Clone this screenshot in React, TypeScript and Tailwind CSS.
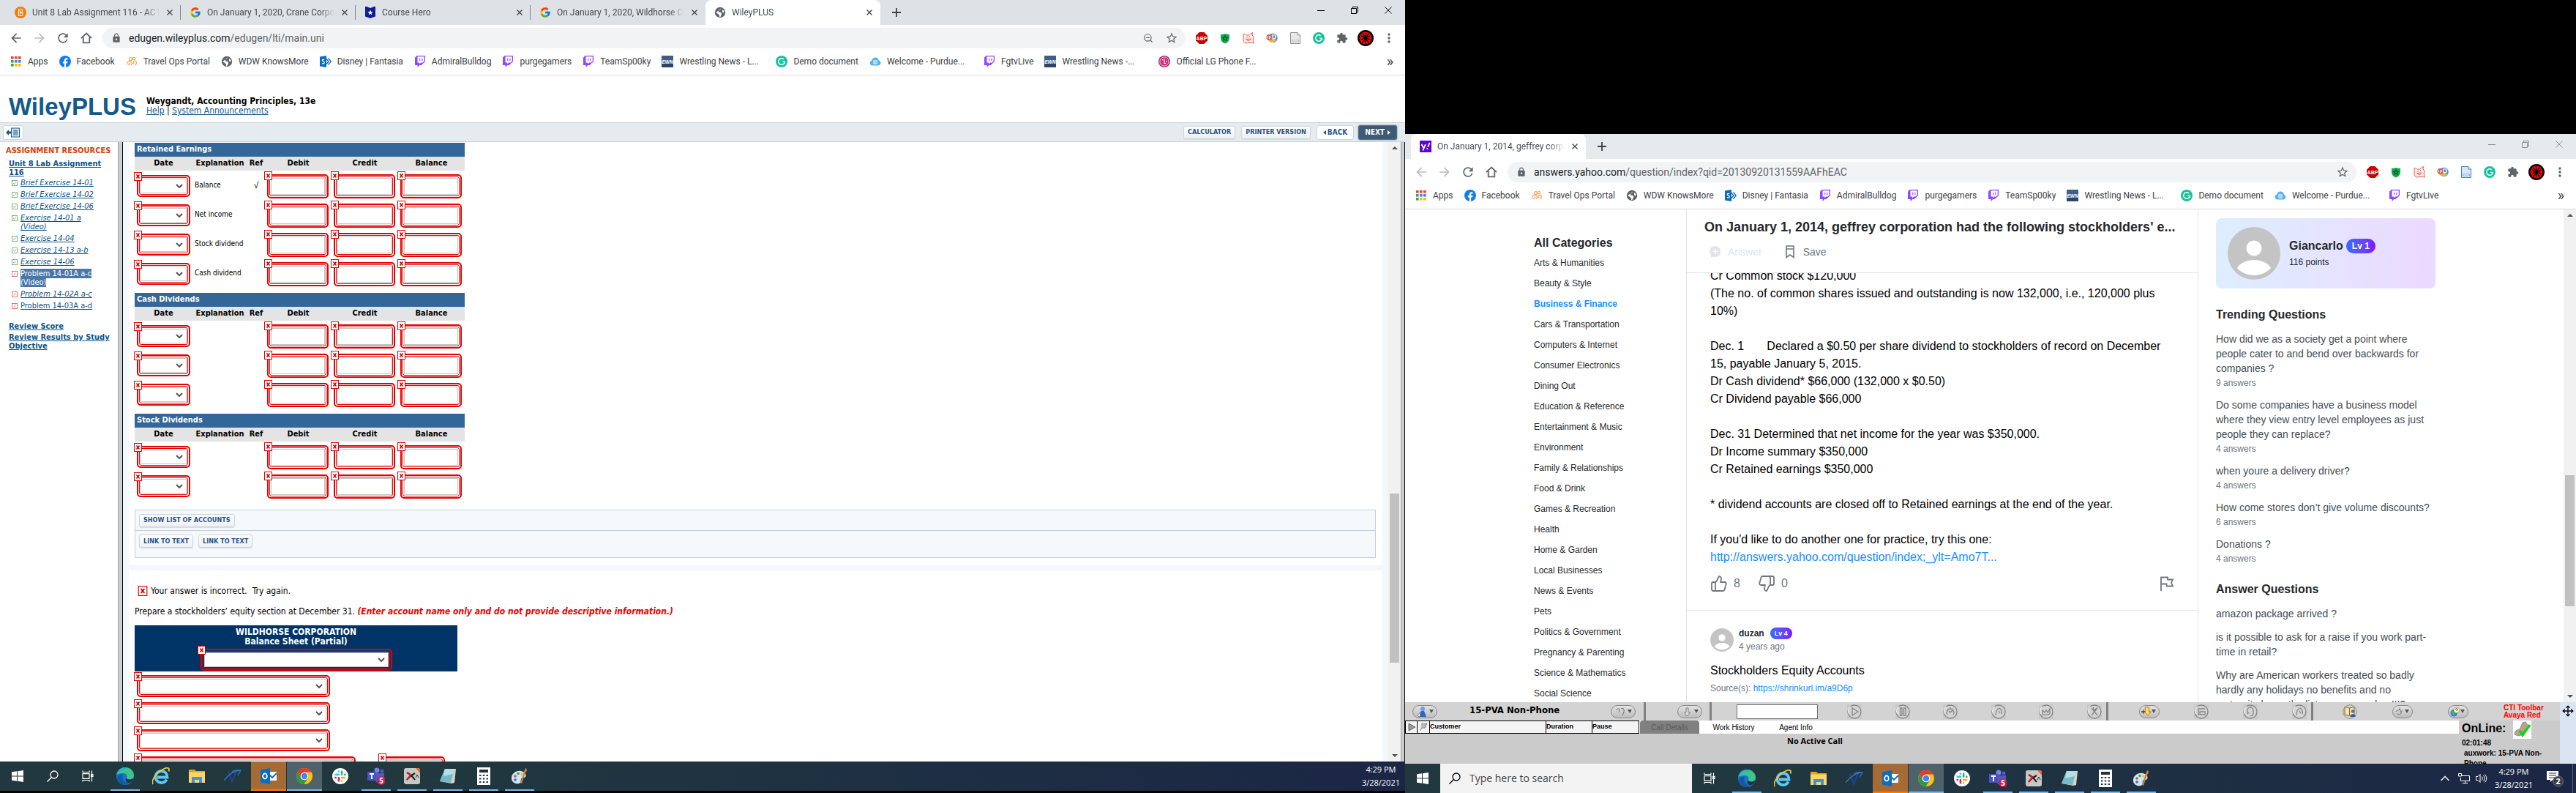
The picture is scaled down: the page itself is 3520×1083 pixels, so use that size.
import { type ReactNode } from "react";
import { clsx } from "clsx";
import { FcGoogle } from "react-icons/fc";
import {
  MdArrowBack,
  MdArrowForward,
  MdExtension,
  MdLock,
  MdMoreVert,
  MdRefresh,
  MdStarBorder,
} from "react-icons/md";
import { Flag, Move, ThumbsDown, ThumbsUp, ZoomOut } from "lucide-react";

/* ---------- small icons ---------- */

function AppsIcon() {
  const colors = ["#ea4335", "#ea4335", "#ea4335", "#34a853", "#4285f4", "#4285f4", "#34a853", "#fbbc05", "#fbbc05"];
  return (
    <svg viewBox="0 0 16 16" className="size-4">
      {colors.map((c, i) => (
        <rect key={i} x={1 + (i % 3) * 5} y={1 + Math.floor(i / 3) * 5} width="3.6" height="3.6" fill={c} />
      ))}
    </svg>
  );
}

function FacebookIcon() {
  return (
    <svg viewBox="0 0 16 16" className="size-4">
      <circle cx="8" cy="8" r="8" fill="#0f7df2" />
      <path d="M9.1 16v-5.6h1.9l.4-2.3H9.1V6.700c0-.7.3-1.2 1.3-1.2h1.1V3.4c-.5-.1-1-.2-1.6-.2-1.8 0-3 1.1-3 3v1.900h-2v2.3h2V16z" fill="#fff" />
    </svg>
  );
}

function TravelIcon() {
  return (
    <svg viewBox="0 0 16 16" className="size-4" fill="none" stroke="#f6a04c" strokeWidth="1.1">
      <circle cx="6.5" cy="4.5" r="2" />
      <circle cx="11" cy="4" r="1.8" />
      <path d="M1 12c1-4 4-6 6-4s1 3 3 3-1-4 2-4 3 4 1 6M3 13l3-3M7 13l1-2" />
    </svg>
  );
}

function GlobeIcon() {
  return (
    <svg viewBox="0 0 16 16" className="size-4">
      <circle cx="8" cy="8" r="7.2" fill="#5f6368" />
      <path d="M9.5 2.2 8 4.6 5.6 5.5l.6 2 3 .4 1 2-1.4 3.6c-.5.6-1.3.9-1.7.9L7 11.7 5 9.8 2.2 8.2M11 4l2.6 2-.7 2.4-1.9-1z" fill="#fff" />
    </svg>
  );
}

function SharepointIcon() {
  return (
    <svg viewBox="0 0 16 16" className="size-4">
      <path d="M9 4.5 12 8l-3 3.5M11.5 3.5 15.2 8l-3.7 4.5" fill="none" stroke="#0d6cbe" strokeWidth="1.3" />
      <path d="M0 1.5 9 0v16l-9-1.5z" fill="#0d6cbe" />
      <path d="M6.2 5.7C5 5 3.3 5.2 3.3 6.5s3 1.3 3 2.9-2 1.8-3.3 1" fill="none" stroke="#fff" strokeWidth="1.2" />
    </svg>
  );
}

function TwitchIcon() {
  return (
    <svg viewBox="0 0 16 16" className="size-4">
      <path d="M3.5 0 1 2.8v10.3h3.6V16l2.8-2.9h2.3L15 8V0z" fill="#9146ff" />
      <path d="M13.7 7.4 11.5 9.6H9.2l-2 2v-2H4.5V1.3h9.2z" fill="#fff" />
      <path d="M7.2 3.7h1.1v3.2H7.2zM10.3 3.7h1.1v3.2h-1.1z" fill="#9146ff" />
    </svg>
  );
}

function EwnIcon() {
  return (
    <svg viewBox="0 0 16 16" className="size-4">
      <rect width="16" height="16" fill="#3f5f8a" />
      <rect y="11" width="16" height="5" fill="#2b4468" />
      <text x="8" y="10.6" fontSize="6.5" fontStyle="italic" fontWeight="700" fontFamily="Liberation Sans" fill="#fff" textAnchor="middle">EWN</text>
    </svg>
  );
}

function GrammarlyIcon() {
  return (
    <svg viewBox="0 0 16 16" className="size-4">
      <circle cx="8" cy="8" r="8" fill="#15c39a" />
      <path d="M11 4.9A4.3 4.3 0 1 0 12.3 8.4H9.2M12.3 8.4v2.6" fill="none" stroke="#fff" strokeWidth="1.4" />
    </svg>
  );
}

function CloudIcon() {
  return (
    <svg viewBox="0 0 16 16" className="size-4">
      <path d="M4 13.5a3.5 3.5 0 0 1-1-6.800C3.600 4.500 5.600 2.500 8.300 2.500s4.200 1.800 4.700 4.200a3.500 3.500 0 0 1-.5 6.800z" fill="#5cb3e6" />
      <rect x="5" y="6" width="6" height="6" rx="1" fill="#a9dcf7" />
    </svg>
  );
}

function LgIcon() {
  return (
    <svg viewBox="0 0 16 16" className="size-4">
      <circle cx="8" cy="8" r="8" fill="#b5135a" />
      <circle cx="8" cy="8" r="6.2" fill="#c8327a" stroke="#fff" strokeWidth=".8" />
      <path d="M8 4.5v6h2.2M12 8H9.8" fill="none" stroke="#fff" strokeWidth="1.1" />
      <circle cx="5.7" cy="5.8" r=".8" fill="#fff" />
    </svg>
  );
}

function BarnesIcon() {
  return (
    <svg viewBox="0 0 16 16" className="size-4">
      <circle cx="8" cy="8" r="8" fill="#f07c12" />
      <path d="M5.5 3.5h3.2c2.4 0 2.6 3.3.5 4.2 2.6.6 2.5 4.8-.5 4.8H5.5zM7.500 5.5v5M7.500 8h1.500" fill="none" stroke="#fff" strokeWidth="1.1" />
    </svg>
  );
}

function CourseHeroIcon() {
  return (
    <svg viewBox="0 0 16 16" className="size-4">
      <path d="M1 0h2l5 2 5-2h2v13.5L8 16l-7-2.5z" fill="#0f1e96" />
      <path d="m8 4.5 1 2.4 2.6.2-2 1.7.6 2.5L8 9.9l-2.2 1.4.6-2.5-2-1.7 2.6-.2z" fill="#fff" />
    </svg>
  );
}

function YahooIcon() {
  return (
    <svg viewBox="0 0 16 16" className="size-4">
      <rect width="16" height="16" fill="#5f01d1" />
      <path d="m2.5 5 2.7 5M8 5l-3.6 8.5" stroke="#fff" strokeWidth="1.9" fill="none" />
      <path d="m11.2 8.6 2.3-5.6" stroke="#fff" strokeWidth="1.9" />
      <circle cx="10.3" cy="11" r="1.1" fill="#fff" />
    </svg>
  );
}

function HomeIcon() {
  return (
    <svg viewBox="0 0 16 16" className="size-4" fill="none" stroke="#5f6368" strokeWidth="1.8">
      <path d="M1 8.200 8 1.500l7 6.700M3.700 6.500v7.800h8.600V6.500" />
    </svg>
  );
}

function AbpIcon() {
  return (
    <svg viewBox="0 0 16 16" className="size-4">
      <path d="M4.7 0h6.6L16 4.700v6.600L11.300 16H4.700L0 11.300V4.700z" fill="#cb0000" />
      <text x="8" y="10.7" fontSize="7" fontWeight="700" fontFamily="Liberation Sans" fill="#fff" textAnchor="middle">ABP</text>
    </svg>
  );
}

function ShieldIcon() {
  return (
    <svg viewBox="0 0 16 16" className="size-4">
      <path d="M8 2c2 .6 4 1 6 1v5c0 4-3 6.5-6 7.5C5 14.5 2 12 2 8V3c2 0 4-.4 6-1z" fill="#11ad4d" />
      <path d="m8 5 1 2 2.3.3-1.7 1.5.5 2.3L8 10l-2.1 1.1.5-2.3-1.7-1.500L7 7z" fill="none" stroke="#0b4a2c" strokeWidth="1.1" />
    </svg>
  );
}

function PigIcon() {
  return (
    <svg viewBox="0 0 16 16" className="size-4" fill="#fdecea" stroke="#e65a55">
      <path d="M1 2.5c2 0 3 .8 4 1.5h4c1.500-1 2-2.500 4.500-3.500L13 4l2 2-.8 4.500 1.300 4.500-4-.8-8 .8L1 12V6z" />
      <path d="M4.500 9.500c2 2.700 5 2.700 6.500-.5zM6 6v1.500M9.500 5.500V7" />
    </svg>
  );
}

function SwirlIcon() {
  return (
    <svg viewBox="0 0 16 16" className="size-4">
      <circle cx="9.5" cy="8" r="6.2" fill="#4f86c9" />
      <circle cx="10.5" cy="6.5" r="3.6" fill="#dfe8f2" />
      <path d="M4 12c3 3 8 2.5 10.5-1.500-3 .5-6-.5-7-2.500z" fill="#f2b23a" />
      <ellipse cx="4.500" cy="7" rx="4" ry="4.200" fill="#c46a63" />
      <path d="M2.500 5.500v3M4.500 5v4.500M6.500 5.500V8" stroke="#fff" strokeWidth=".9" />
      <path d="M11 4.500V8" stroke="#27477c" strokeWidth="1.2" />
    </svg>
  );
}

function DocIcon({ blue }: { blue?: boolean }) {
  return (
    <svg viewBox="0 0 16 16" className="size-4" stroke={blue ? "#4a7fc4" : "#8f8f8f"}>
      <path d="M1.500.5H11L14.500 4v11.500h-13z" fill={blue ? "#d6e7fb" : "#e9e9e9"} />
      <path d="M11 .5V4h3.500" fill="#fff" />
      <rect x="3.500" y="11" width="9" height="2" fill="#fff" strokeWidth=".6" />
    </svg>
  );
}

function ProfileIcon() {
  return (
    <svg viewBox="0 0 22 22" className="size-[22px]">
      <circle cx="11" cy="11" r="11" fill="#0a0000" />
      <circle cx="11" cy="11" r="8.5" fill="#e00a0a" />
      <path d="M11 4v14M5 8l6 3 6-3M4.500 13l6.500-2 6.500 2M7 17l4-6 4 6M7 5l4 6 4-6" stroke="#0a0000" strokeWidth="1.2" fill="none" />
      <ellipse cx="11" cy="10.500" rx="1.8" ry="3" fill="#0a0000" />
    </svg>
  );
}

/* ---------- browser frame ---------- */

const bookmarks: { label: string; icon: ReactNode; clipped?: boolean }[] = [
  { label: "Apps", icon: <AppsIcon /> },
  { label: "Facebook", icon: <FacebookIcon /> },
  { label: "Travel Ops Portal", icon: <TravelIcon /> },
  { label: "WDW KnowsMore", icon: <GlobeIcon /> },
  { label: "Disney | Fantasia", icon: <SharepointIcon /> },
  { label: "AdmiralBulldog", icon: <TwitchIcon /> },
  { label: "purgegamers", icon: <TwitchIcon /> },
  { label: "TeamSp00ky", icon: <TwitchIcon /> },
  { label: "Wrestling News - L...", icon: <EwnIcon />, clipped: true },
  { label: "Demo document", icon: <GrammarlyIcon /> },
  { label: "Welcome - Purdue...", icon: <CloudIcon />, clipped: true },
  { label: "FgtvLive", icon: <TwitchIcon /> },
  { label: "Wrestling News -...", icon: <EwnIcon />, clipped: true },
  { label: "Official LG Phone F...", icon: <LgIcon />, clipped: true },
];

interface BrowserProps {
  tabs: { title: string; icon: ReactNode }[];
  host: string;
  path: string;
  focused?: boolean;
  bookmarkCount: number;
  children: ReactNode;
}

function WindowControls() {
  const glyphs: [string, string][] = [
    ["Minimize", "M0 5.5h10"],
    ["Restore", "M.5 2.5h7v7h-7zM2.5 2.5v-2h7v7h-2"],
    ["Close", "m.5.5 9 9M9.5.5l-9 9"],
  ];
  return (
    <div className="ml-auto flex h-7">
      {glyphs.map(([label, d]) => (
        <button key={label} aria-label={label} className="grid w-[46px] place-items-center">
          <svg viewBox="0 0 10 10" className="size-[10px]" fill="none" stroke="currentColor">
            <path d={d} />
          </svg>
        </button>
      ))}
    </div>
  );
}

function NavButton({ label, children }: { label: string; children: ReactNode }) {
  return (
    <button aria-label={label} className="grid w-8 shrink-0 place-items-center">
      {children}
    </button>
  );
}

function Browser({ tabs, host, path, focused, bookmarkCount, children }: BrowserProps) {
  return (
    <section className="flex min-h-0 flex-1 flex-col bg-white font-[Roboto,sans-serif] text-xs text-[#3c4043]">
      <div className={clsx("flex h-[34px] shrink-0 pl-2", focused ? "bg-[#dee1e6] text-black" : "bg-[#e6eaed] text-[#8a8d90]")}>
        {tabs.map((tab, i) => {
          const active = i === tabs.length - 1;
          return (
            <div
              key={tab.title}
              className={clsx(
                "flex w-[239px] items-center gap-2 pl-3 text-[#45494d]",
                active && "rounded-t-lg bg-white",
              )}
            >
              {tab.icon}
              <span className="min-w-0 flex-1 overflow-hidden whitespace-nowrap [mask-image:linear-gradient(to_right,black_88%,transparent)]">
                {tab.title}
              </span>
              <button aria-label={`Close ${tab.title}`} className="p-0.5">
                <svg viewBox="0 0 8 8" className="size-2" stroke="currentColor" strokeWidth="1.4">
                  <path d="m.5.5 7 7M7.5.5l-7 7" />
                </svg>
              </button>
              <span className={clsx("h-5 w-px", i < tabs.length - 2 && "bg-[#808387]", active && "w-1.5")} />
            </div>
          );
        })}
        <button aria-label="New tab" className="grid w-11 place-items-center text-[#3c4043]">
          <svg viewBox="0 0 12 12" className="size-3" stroke="currentColor" strokeWidth="1.8">
            <path d="M6 0v12M0 6h12" />
          </svg>
        </button>
        <WindowControls />
      </div>

      <div className="flex h-9 shrink-0 items-center px-1.5 text-[#5f6368]">
        <NavButton label="Back"><MdArrowBack className={clsx("size-5", !focused && "text-[#babcbe]")} /></NavButton>
        <NavButton label="Forward"><MdArrowForward className="size-5 text-[#babcbe]" /></NavButton>
        <NavButton label="Reload"><MdRefresh className="size-5" /></NavButton>
        <NavButton label="Home"><HomeIcon /></NavButton>
        <div className="mx-1.5 flex h-7 min-w-0 flex-1 items-center gap-2.5 rounded-full bg-[#f1f3f4] px-2.5">
          <MdLock className="ml-0.5 size-3.5 shrink-0" />
          <span className="flex-1 truncate text-sm">
            <span className="text-[#202124]">{host}</span>
            {path}
          </span>
          {focused && <ZoomOut className="mr-1.5 size-3.5" />}
          <MdStarBorder className="size-[18px]" />
        </div>
        <NavButton label="AdBlock Plus"><AbpIcon /></NavButton>
        <NavButton label="Shield"><ShieldIcon /></NavButton>
        <NavButton label="Piggy"><PigIcon /></NavButton>
        <NavButton label="Wheel"><SwirlIcon /></NavButton>
        <NavButton label="Notes"><DocIcon blue={!focused} /></NavButton>
        <NavButton label="Grammarly"><GrammarlyIcon /></NavButton>
        <NavButton label="Extensions"><MdExtension className="size-4" /></NavButton>
        <NavButton label="Profile"><ProfileIcon /></NavButton>
        <NavButton label="Menu"><MdMoreVert className="size-5" /></NavButton>
      </div>

      <nav className="flex h-[33px] shrink-0 items-center gap-[15px] border-b border-[#d9dadc] pr-4 pb-1 pl-3.5">
        {bookmarks.slice(0, bookmarkCount).map((b, i) => (
          <a key={i} href="#" className="flex shrink-0 items-center gap-2 whitespace-nowrap">
            {b.icon}
            <span className={clsx(b.clipped && "w-[117px]")}>{b.label}</span>
          </a>
        ))}
        <button aria-label="More bookmarks" className="ml-auto text-xl leading-none">»</button>
      </nav>

      <div className="flex min-h-0 flex-1 overflow-hidden">{children}</div>
    </section>
  );
}

/* ---------- WileyPLUS ---------- */

function WrongMark({ className }: { className?: string }) {
  return (
    <svg viewBox="0 0 11 12" className={className}>
      <rect x=".5" y=".5" width="10" height="11" fill="#fff" stroke="#e60000" />
      <path d="m3.5 3.5 4 5M7.5 3.5l-4 5" stroke="#c00000" strokeWidth="1.5" />
    </svg>
  );
}

interface FieldProps {
  label: string;
  kind?: "select" | "input";
  className: string;
}

function Field({ label, kind = "input", className }: FieldProps) {
  return (
    <div className={clsx("relative", className)}>
      <div className="h-full rounded-[5px] border-2 border-[#e60000] p-px">
        <div className="relative h-full rounded-[3px] border border-[#e60000] p-px">
          {kind === "select" ? (
            <>
              <select aria-label={label} className="block size-full appearance-none border border-[#c4c4c4] bg-white" />
              <svg viewBox="0 0 10 6" className="pointer-events-none absolute top-1/2 right-1.5 h-1.5 w-2.5 -translate-y-1/2" fill="none" stroke="#555" strokeWidth="2">
                <path d="m1 1 4 4 4-4" />
              </svg>
            </>
          ) : (
            <input aria-label={label} type="text" className="block size-full border border-[#c4c4c4] bg-white" />
          )}
        </div>
      </div>
      <WrongMark className="absolute -top-1 -left-1 h-3 w-[11px]" />
    </div>
  );
}

const ledgers = [
  { title: "Retained Earnings", rows: [["Balance", "√"], ["Net income", ""], ["Stock dividend", ""], ["Cash dividend", ""]] },
  { title: "Cash Dividends", rows: [["", ""], ["", ""], ["", ""]] },
  { title: "Stock Dividends", rows: [["", ""], ["", ""]] },
];

function Ledger({ title, rows }: { title: string; rows: string[][] }) {
  return (
    <table className="w-[451px] table-fixed text-[10px] text-black">
      <colgroup>
        <col className="w-[79px]" />
        <col className="w-[75px]" />
        <col className="w-6" />
        <col />
        <col />
        <col />
      </colgroup>
      <thead className="text-[11px]">
        <tr className="h-[19px] bg-[#336699] text-left text-white">
          <th colSpan={6} className="px-[3px] py-0">{title}</th>
        </tr>
        <tr className="h-[19px] bg-[#e4e4e4]">
          {["Date", "Explanation", "Ref", "Debit", "Credit", "Balance"].map((h) => (
            <th key={h} className="p-0">{h}</th>
          ))}
        </tr>
      </thead>
      <tbody>
        {rows.map(([text, ref], i) => (
          <tr key={i} className="h-10">
            <td className="py-0 pt-0.5 pl-[3px]">
              <Field kind="select" label={`${title} date ${i + 1}`} className="h-[30px] w-[73px]" />
            </td>
            <td className="py-0 pl-[3px] whitespace-nowrap">{text}</td>
            <td className="p-0 text-center font-[Liberation_Sans] text-xs">{ref}</td>
            {["debit", "credit", "balance"].map((c) => (
              <td key={c} className="py-0 pt-[3px] pl-[3px]">
                <Field label={`${title} ${c} ${i + 1}`} className="h-[33px] w-[84px]" />
              </td>
            ))}
          </tr>
        ))}
      </tbody>
    </table>
  );
}

const resources: { label: string; state: "done" | "wrong"; current?: boolean; plain?: boolean }[] = [
  { label: "Brief Exercise 14-01", state: "done" },
  { label: "Brief Exercise 14-02", state: "done" },
  { label: "Brief Exercise 14-06", state: "done" },
  { label: "Exercise 14-01 a (Video)", state: "done" },
  { label: "Exercise 14-04", state: "done" },
  { label: "Exercise 14-13 a-b", state: "done" },
  { label: "Exercise 14-06", state: "done" },
  { label: "Problem 14-01A a-c (Video)", state: "wrong", current: true },
  { label: "Problem 14-02A a-c", state: "wrong" },
  { label: "Problem 14-03A a-d", state: "wrong", plain: true },
];

function StateIcon({ state }: { state: "done" | "wrong" }) {
  return (
    <svg viewBox="0 0 8 8" className="mt-0.5 size-2 shrink-0" fill="#fff" stroke={state === "done" ? "#7fb57b" : "#e8746c"}>
      <rect x=".5" y=".5" width="7" height="7" />
      <path d={state === "done" ? "m2 4 1.5 1.5L6 2.500" : "m2.500 5.500 3-3"} fill="none" />
    </svg>
  );
}

function Sidebar() {
  return (
    <aside className="w-[161px] shrink-0 pt-1.5 text-[11px] leading-3 text-[#0b5487]">
      <h2 className="pl-2 font-bold whitespace-nowrap text-[#d2430c]">ASSIGNMENT RESOURCES</h2>
      <div className="pt-1.5 pl-3">
        <a href="#" className="block w-[130px] font-bold underline">Unit 8 Lab Assignment 116</a>
        <ul className="flex flex-col gap-1 pt-0.5 pl-1">
          {resources.map((r) => (
            <li key={r.label} className="flex gap-1">
              <StateIcon state={r.state} />
              <span className="w-[108px]">
                <a
                  href="#"
                  className={clsx(
                    r.current ? "bg-[#4a77a8] text-white" : "underline",
                    !r.current && !r.plain && "italic",
                  )}
                >
                  {r.label}
                </a>
              </span>
            </li>
          ))}
        </ul>
        <a href="#" className="mt-4 block font-bold underline">Review Score</a>
        <a href="#" className="mt-[3px] block font-bold underline">Review Results by Study Objective</a>
      </div>
    </aside>
  );
}

function SmallButton({ children }: { children: ReactNode }) {
  return (
    <button className="h-[18px] rounded-[3px] border border-[#cdd5de] bg-linear-to-b from-white to-[#edf0f3] px-[5px] text-[9px] leading-none font-bold whitespace-nowrap text-[#2a5488] shadow-[0_1px_1px_#d5dbe2]">
      {children}
    </button>
  );
}

function Scrollbar({ top, size }: { top: number; size: number }) {
  return (
    <div className="relative flex w-[17px] shrink-0 flex-col items-center justify-between bg-[#f1f1f1] py-1.5">
      <span className="border-x-4 border-b-4 border-transparent border-b-[#505050]" />
      <span className="absolute inset-x-0.5 bg-[#c1c1c1]" style={{ top: `${top}%`, height: `${size}%` }} />
      <span className="border-x-4 border-t-4 border-transparent border-t-[#505050]" />
    </div>
  );
}

function WileyPage() {
  return (
    <div className="flex min-w-0 flex-1 flex-col font-['DejaVu_Sans_Condensed',sans-serif] text-black">
      <header className="flex h-16 shrink-0 items-center gap-3.5 px-3 pt-5">
        <span className="font-['Liberation_Sans'] text-[33px] leading-none font-bold text-[#135a8c]">WileyPLUS</span>
        <div className="text-xs leading-[13px]">
          <p className="font-bold">Weygandt, Accounting Principles, 13e</p>
          <p>
            <a href="#" className="text-[#135a8c] underline">Help</a> |{" "}
            <a href="#" className="text-[#135a8c] underline">System Announcements</a>
          </p>
        </div>
      </header>
      <div className="flex h-[27px] shrink-0 items-center gap-2 border-y border-[#c9d2dc] bg-[#e6ebef] pr-[11px] pl-1">
        <button aria-label="Hide menu" className="grid h-5 w-7 place-items-center rounded-[3px] border border-[#cdd5de] bg-white">
          <svg viewBox="0 0 20 14" className="h-3.5 w-5">
            <path d="m0 7 4-4v2.500h3v3H4V11z" fill="#135a8c" />
            <rect x="7.500" y="1" width="11" height="12" fill="#dfeaf4" stroke="#135a8c" />
            <path d="M10 4h6.500M10 6h6.500M10 8h6.500M10 10h6.500" stroke="#135a8c" />
          </svg>
        </button>
        <div className="ml-auto flex items-center gap-2">
          <SmallButton>CALCULATOR</SmallButton>
          <SmallButton>PRINTER VERSION</SmallButton>
          <button className="flex h-5 items-center gap-0.5 rounded-[3px] border border-[#cdd5de] bg-white px-2 text-[10px] leading-none font-bold text-[#2a5488]">
            <span className="border-y-[3px] border-r-4 border-transparent border-r-[#2a5488]" />
            BACK
          </button>
          <button className="-ml-0.5 flex h-5 items-center gap-1 rounded-[3px] border border-[#54708b] bg-[#3d5b77] px-2 text-[10px] leading-none font-bold text-white shadow-[0_0_2px_#3d5b77]">
            NEXT
            <span className="border-y-[3px] border-l-4 border-transparent border-l-white" />
          </button>
        </div>
      </div>

      <div className="flex min-h-0 flex-1">
        <Sidebar />
        <div className="w-[7px] shrink-0 border-r border-l border-r-black border-l-[#a0a0a0] bg-[#cdcdcd]" />
        <main className="flex min-w-0 flex-1 flex-col gap-[7px] overflow-hidden bg-[#f4f8fb] px-2 *:shrink-0">
          <div className="flex flex-col gap-[7px] bg-white pt-px pr-[9px] pb-[10px] pl-2">
            {ledgers.map((l) => (
              <Ledger key={l.title} {...l} />
            ))}
            <div className="mt-1.5 border border-[#c5cede] bg-[#f5f9fc]">
              <div className="flex h-7 items-center border-b border-[#c5cede] px-[5px]">
                <SmallButton>SHOW LIST OF ACCOUNTS</SmallButton>
              </div>
              <div className="flex h-9 items-start gap-[7px] px-[5px] pt-[5px]">
                <SmallButton>LINK TO TEXT</SmallButton>
                <SmallButton>LINK TO TEXT</SmallButton>
              </div>
            </div>
          </div>
          <div className="min-h-[500px] bg-white pt-5 pl-2 text-xs leading-4">
            <p className="flex items-center gap-1 pl-1">
              <WrongMark className="size-3.5" />
              <span className="whitespace-pre">Your answer is incorrect.  Try again.</span>
            </p>
            <p className="pt-3">
              Prepare a stockholders’ equity section at December 31.{" "}
              <b className="text-[#f00000] italic">(Enter account name only and do not provide descriptive information.)</b>
            </p>
            <div className="mt-[11px] flex h-[63px] w-[441px] flex-col items-center bg-[#003366] pt-[3px] leading-[13px] font-bold text-white">
              <p>WILDHORSE CORPORATION</p>
              <p>Balance Sheet (Partial)</p>
              <Field kind="select" label="Statement date" className="mt-[3px] h-[30px] w-[262px]" />
            </div>
            <div className="flex flex-col items-start gap-[7px] pt-[5px] pl-[3px]">
              <Field kind="select" label="Section" className="h-[30px] w-[264px]" />
              <Field kind="select" label="Stock class" className="h-[30px] w-[264px]" />
              <Field kind="select" label="Account" className="h-[30px] w-[264px]" />
              <div className="flex gap-[35px]">
                <Field kind="select" label="Account" className="h-[30px] w-[299px]" />
                <Field label="Amount" className="h-[30px] w-[87px]" />
              </div>
            </div>
          </div>
        </main>
        <Scrollbar top={56.7} size={27.3} />
        <div className="w-1.5 shrink-0 border-r border-l border-r-black border-l-[#a0a0a0] bg-[#cdcdcd]" />
      </div>
    </div>
  );
}

/* ---------- Yahoo Answers ---------- */

const categories = [
  "Arts & Humanities", "Beauty & Style", "Business & Finance", "Cars & Transportation", "Computers & Internet",
  "Consumer Electronics", "Dining Out", "Education & Reference", "Entertainment & Music", "Environment",
  "Family & Relationships", "Food & Drink", "Games & Recreation", "Health", "Home & Garden", "Local Businesses",
  "News & Events", "Pets", "Politics & Government", "Pregnancy & Parenting", "Science & Mathematics", "Social Science",
];

const trending: [string, number][] = [
  ["How did we as a society get a point where people cater to and bend over backwards for companies ?", 9],
  ["Do some companies have a business model where they view entry level employees as just people they can replace?", 4],
  ["when youre a delivery driver?", 4],
  ["How come stores don’t give volume discounts?", 6],
  ["Donations ?", 4],
];

const openQuestions = [
  "amazon package arrived ?",
  "is it possible to ask for a raise if you work part-time in retail?",
  "Why are American workers treated so badly hardly any holidays no benefits and no maternity leave the list goes on and on!!!?",
];

const answerText = `Cr Common stock $120,000
(The no. of common shares issued and outstanding is now 132,000, i.e., 120,000 plus 10%)

Dec. 1       Declared a $0.50 per share dividend to stockholders of record on December 15, payable January 5, 2015.
Dr Cash dividend* $66,000 (132,000 x $0.50)
Cr Dividend payable $66,000

Dec. 31 Determined that net income for the year was $350,000.
Dr Income summary $350,000
Cr Retained earnings $350,000

* dividend accounts are closed off to Retained earnings at the end of the year.

If you'd like to do another one for practice, try this one:
`;

function Avatar({ className }: { className: string }) {
  return (
    <svg viewBox="0 0 72 72" className={clsx("shrink-0", className)}>
      <circle cx="36" cy="36" r="36" fill="#c4c4c4" />
      <circle cx="36" cy="29" r="10.5" fill="#fff" />
      <path d="M13 56c4-7 13-11 23-11s19 4 23 11c-5 6-14 10-23 10s-18-4-23-10z" fill="#fff" />
    </svg>
  );
}

function YahooPage() {
  return (
    <div className="flex min-w-0 flex-1 font-['Liberation_Sans',Arial,sans-serif] text-xs text-[#26282a]">
      <nav className="w-[384px] shrink-0 pt-9 pl-44">
        <h2 className="mb-[3px] text-base leading-5 font-bold">All Categories</h2>
        {categories.map((c) => (
          <a key={c} href="#" className={clsx("block leading-7", c === "Business & Finance" && "font-bold text-[#188fff]")}>
            {c}
          </a>
        ))}
      </nav>
      <main className="flex w-[700px] shrink-0 flex-col border-x border-[#e0e4e9]">
        <header className="h-[87px] shrink-0 border-b border-[#e0e4e9] px-6 pt-3">
          <h1 className="text-lg leading-6 font-bold whitespace-nowrap">
            On January 1, 2014, geffrey corporation had the following stockholders' e...
          </h1>
          <div className="flex items-center gap-8 pt-3 pl-1.5 text-sm leading-5 text-[#6e7780]">
            <button disabled className="flex items-center gap-2 text-[#e0e4e9]">
              <svg viewBox="0 0 18 18" className="size-[18px]">
                <path d="M9 1a7.500 7.500 0 1 1-3 14.500L3 17v-4A7.500 7.500 0 0 1 9 1z" fill="#e0e4e9" />
                <path d="M9 5v7M5.500 8.500h7" stroke="#fff" strokeWidth="1.6" />
              </svg>
              Answer
            </button>
            <button className="flex items-center gap-3">
              <svg viewBox="0 0 12 18" className="h-[18px] w-3" fill="none" stroke="#6e7780" strokeWidth="1.6">
                <path d="M1 1h10v15.500L6 13l-5 3.500zM1 5h10" />
              </svg>
              Save
            </button>
          </div>
        </header>
        <div className="min-h-0 flex-1 overflow-hidden">
          <article className="-mt-2 border-b border-[#e0e4e9] px-8 pb-6">
            <p className="text-base leading-6 whitespace-pre-wrap text-black">
              {answerText}
              <a href="#" className="text-[#188fff]">http://answers.yahoo.com/question/index;_ylt=Amo7T...</a>
            </p>
            <div className="flex items-center gap-2 pt-3 text-base leading-6 text-[#6e7780]">
              <button aria-label="Thumbs up"><ThumbsUp className="size-6 stroke-[1.8]" /></button>
              <span>8</span>
              <button aria-label="Thumbs down" className="ml-4"><ThumbsDown className="size-6 stroke-[1.8]" /></button>
              <span>0</span>
              <button aria-label="Report" className="ml-auto">
                <Flag className="hidden" />
                <svg viewBox="0 0 20 20" className="size-5" fill="none" stroke="currentColor" strokeWidth="1.8">
                  <path d="M2 20V1.500h9v3h7L16 9l2 4.500H9.500v-3H2" />
                </svg>
              </button>
            </div>
          </article>
          <article className="px-8 pt-[22px]">
            <div className="flex items-center gap-[7px]">
              <Avatar className="size-8" />
              <div className="leading-[18px]">
                <p className="flex items-center gap-2 font-bold">
                  duzan
                  <span className="rounded-full bg-linear-to-r from-[#2b6bff] to-[#7b0fff] px-1.5 text-[9px] leading-4 text-white">Lv 4</span>
                </p>
                <p className="text-[#6e7780]">4 years ago</p>
              </div>
            </div>
            <p className="pt-3 text-base leading-6 text-black">Stockholders Equity Accounts</p>
            <p className="leading-6 text-[#6e7780]">
              Source(s): <a href="#" className="text-[#188fff]">https://shrinkurl.im/a9D6p</a>
            </p>
          </article>
        </div>
      </main>
      <aside className="flex min-w-0 flex-1 flex-col overflow-hidden pt-3 pl-6 text-sm leading-5 text-[#464e56] *:shrink-0">
        <div className="flex h-24 w-[300px] items-center gap-3 rounded-lg bg-linear-to-r from-[#ddeeff] to-[#ecd9ff] pl-4 text-[#26282a]">
          <Avatar className="size-[72px]" />
          <div>
            <p className="flex items-center gap-1 text-base font-bold">
              Giancarlo
              <span className="rounded-full bg-linear-to-r from-[#2b6bff] to-[#7b0fff] px-2 text-xs leading-5 text-white">Lv 1</span>
            </p>
            <p className="text-xs leading-5">116 points</p>
          </div>
        </div>
        <h2 className="mt-[26px] mb-[13px] text-base leading-5 font-bold text-[#26282a]">Trending Questions</h2>
        <ul className="flex w-[300px] flex-col gap-2.5">
          {trending.map(([question, answers]) => (
            <li key={question}>
              <a href="#">{question}</a>
              <p className="text-xs leading-5 text-[#6e7780]">{answers} answers</p>
            </li>
          ))}
        </ul>
        <h2 className="mt-[22px] mb-[13px] text-base leading-5 font-bold text-[#26282a]">Answer Questions</h2>
        <ul className="flex w-[300px] flex-col gap-3">
          {openQuestions.map((question) => (
            <li key={question}><a href="#">{question}</a></li>
          ))}
        </ul>
      </aside>
      <Scrollbar top={54} size={26.6} />
    </div>
  );
}

/* ---------- call toolbar ---------- */

const glyph = {
  play: "M7 5v10l8-5z",
  pause: "M6.5 5v10H9V5zM11.500 5v10H14V5z",
  drop: "M6 14c-2-3 0-8 4-8s6 5 4 8M8 9l2 2 3-3M10 6V4",
  call: "M6 15c0-6 2-9 5-10 3 2 4 4 3 8M10 9l2 3",
  bounce: "M5 14V8l3 3 2-3 2 3 3-5v6c0 2-8 3-10 2z",
  cross: "m6 5 8 10M14 5 6 15M8 4l2 4 3-3",
  list: "M6 5v10M6 6h9M8 10h7v4H8z",
  headset: "M6 12V8a4 4 0 0 1 8 0v4M14 12c0 3-3 4-4 3M8 11l-2 2",
  hand: "M5 11c2-4 5 0 6-5l2 6 2-3M7 14c3 2 6 1 7-2",
  phones: "M5 8c0-3 4-3 4 0l-1 3M11 6c3-2 5 1 4 4l-2 5",
  arrow: "M8 5v6H5.500l4 5 4-5H11V5z",
};

function RoundButton({ label, d }: { label: string; d: string }) {
  return (
    <button aria-label={label} className="size-5 shrink-0 bg-[#c9c9c9]">
      <svg viewBox="0 0 20 20" className="size-5" fill="none" stroke="#858585">
        <circle cx="10" cy="10" r="9" fill="#d4d4d4" strokeWidth="1.3" />
        <path d="M2.5 13a8 8 0 0 1 2-10" stroke="#f2f2f2" strokeWidth="1.2" />
        <path d={d} strokeWidth="1.3" />
      </svg>
    </button>
  );
}

function PillButton({ label, wide, children }: { label: string; wide?: boolean; children: ReactNode }) {
  return (
    <button
      aria-label={label}
      className={clsx(
        "flex h-[18px] shrink-0 items-center justify-between rounded-full border border-[#8b8b8b] bg-linear-to-b from-[#e2e2e2] to-[#bdbdbd] pr-1",
        wide ? "w-[34px] pl-1" : "w-7 pl-0.5",
      )}
    >
      <svg viewBox="0 0 16 16" className={wide ? "size-4" : "size-3.5"}>{children}</svg>
      <span className="border-x-[3px] border-t-[5px] border-transparent border-t-[#555]" />
    </button>
  );
}

function CallToolbar() {
  return (
    <section className="flex h-[84px] shrink-0 bg-[#cbcbcb] font-['Liberation_Sans',Arial,sans-serif] text-[10px] text-black">
      <div className="flex min-w-0 flex-1 flex-col">
        <div className="flex h-[25px] shrink-0 bg-[#d3d3d3] *:border-r-[3px] *:border-[#808080]">
          <div className="flex w-[329px] shrink-0 items-center pr-[11px] pl-[10px]">
            <PillButton label="Agent state" wide>
              <circle cx="9" cy="4" r="3" fill="#6f9bea" />
              <path d="M7 7h4l3 8H5z" fill="#2f63c4" />
              <path d="M6 8 2 14l3 1z" fill="#fff" stroke="#555" strokeWidth=".6" />
            </PillButton>
            <span className="flex-1 pb-1 pl-[44px] font-['DejaVu_Sans_Condensed'] text-[13px] font-bold">15-PVA Non-Phone</span>
            <PillButton label="Lines" wide>
              <path d={glyph.phones} transform="translate(-2 -2)" fill="none" stroke="#808080" strokeWidth="1.2" />
            </PillButton>
          </div>
          <div className="flex w-[90px] shrink-0 items-center justify-end pr-[10px]">
            <PillButton label="Answer call" wide>
              <path d={glyph.arrow} transform="translate(-1 -2)" fill="#ddd" stroke="#808080" />
            </PillButton>
          </div>
          <div className="flex min-w-0 flex-1 items-center justify-between pr-1.5 pl-[34px]">
            <input aria-label="Number to dial" className="mr-10 h-5 w-[111px] border border-[#707070] bg-white" />
            <div className="flex flex-1 justify-between">
              <RoundButton label="Resume" d={glyph.play} />
              <RoundButton label="Hold" d={glyph.pause} />
              <RoundButton label="Drop" d={glyph.drop} />
              <RoundButton label="Transfer" d={glyph.call} />
              <RoundButton label="Conference" d={glyph.bounce} />
              <RoundButton label="Cancel" d={glyph.cross} />
            </div>
          </div>
          <div className="flex w-[280px] shrink-0 items-center justify-between pr-1.5 pl-[42px]">
            <PillButton label="Send">
              <path d="M6 1h6v7h3l-5 6-5-6h1z" fill="#ffe14a" stroke="#a33" strokeWidth=".8" />
              <path d="M0 8h6M3 5v6" stroke="#444" strokeWidth="1.5" />
            </PillButton>
            <RoundButton label="List" d={glyph.list} />
            <RoundButton label="Headset" d={glyph.headset} />
            <RoundButton label="Redial" d={glyph.call} />
          </div>
          <div className="flex w-[337px] shrink-0 items-center gap-12 border-r-0! pl-10">
            <button aria-label="Directory" className="size-5 shrink-0">
              <svg viewBox="0 0 20 20" className="size-5">
                <circle cx="10" cy="10" r="9.3" fill="#cfcfcf" stroke="#909090" />
                <path d="M3 3.500 9.500 5 16 3.500V14l-6.500 1.500L3 14z" fill="#fbe2a8" stroke="#8a6a2a" />
                <path d="M9.500 5v10" stroke="#8a6a2a" />
                <circle cx="14" cy="9.500" r="2.3" fill="#3c72d8" />
                <path d="M10.500 17c0-5 7-5 7 0z" fill="#2558b8" />
              </svg>
            </button>
            <PillButton label="Gesture">
              <path d={glyph.hand} transform="translate(-3 -3)" fill="none" stroke="#808080" strokeWidth="1.2" />
            </PillButton>
            <PillButton label="Help">
              <circle cx="6" cy="10" r="5.5" fill="#3b83d6" />
              <path d="M3 8c2-2 4 1 3 4s-3-1-3-4z" fill="#4fc04c" />
              <circle cx="10" cy="5.500" r="4.500" fill="#fff6b0" stroke="#777" strokeWidth=".7" />
              <path d="M8.500 4.500c0-2 3-2 3 0 0 1-1.500 1-1.500 2.300" fill="none" stroke="#333" />
            </PillButton>
            <p className="leading-[10px] font-bold text-[#f00]">CTI Toolbar<br />Avaya Red</p>
          </div>
        </div>

        <div className="flex min-h-0 flex-1">
          <div className="flex min-w-0 flex-1 flex-col">
            <div className="flex h-[18px] shrink-0 bg-white">
              <table className="w-80 table-fixed border border-black bg-[#f4f4f4] text-left text-[9px]">
                <thead>
                  <tr className="*:border *:border-black *:p-0">
                    <th className="w-4">
                      <svg viewBox="0 0 14 14" className="mx-auto size-3.5"><path d="m3 2 9 5-9 5z" fill="#999" stroke="#666" /></svg>
                    </th>
                    <th className="w-[17px]">
                      <svg viewBox="0 0 14 14" className="mx-auto size-3.5"><path d="M4 3c3-2 4 1 8-1l-3 6c-2 1-3-1-5 1l-1 3" fill="#bbb" stroke="#777" /></svg>
                    </th>
                    <th className="w-[159px]">Customer</th>
                    <th className="w-[63px]">Duration</th>
                    <th>Pause</th>
                  </tr>
                </thead>
              </table>
              <button className="ml-px w-[81px] rounded-t bg-[#808080] text-[#5a5a5a]">Call Details</button>
              <button className="w-[94px]">Work History</button>
              <button className="w-[76px]">Agent Info</button>
            </div>
            <p className="pt-0.5 pl-[522px] font-['Open_Sans'] text-[11px] font-bold">No Active Call</p>
          </div>
          <div className="w-[138px] shrink-0 overflow-hidden pl-1 font-bold">
            <p className="flex h-[25px] gap-[10px] text-base leading-[22px]">
              OnLine:
              <svg viewBox="0 0 25 25" className="size-[25px]">
                <rect width="25" height="25" fill="#fff" />
                <path d="M2 19c0-4 3-7 7-7l4-9 4-1 3 4-5 8c-2 6-6 9-13 5z" fill="#bca28e" stroke="#777" strokeWidth=".7" />
                <path d="m9 14 4 6L23 6" fill="none" stroke="#12d312" strokeWidth="3.5" />
              </svg>
            </p>
            <p className="leading-[11px]">02:01:48</p>
            <p className="w-[120px] pt-0.5 pl-[3px] leading-[14px]">auxwork: 15-PVA Non-Phone</p>
          </div>
        </div>
      </div>
      <div className="grid w-[22px] shrink-0 place-items-start justify-center bg-[#d9e5f2] pt-1">
        <Move className="size-4" />
      </div>
    </section>
  );
}

/* ---------- taskbar ---------- */

const apps: { label: string; open?: boolean; cell?: string; icon: ReactNode }[] = [
  {
    label: "Edge",
    open: true,
    icon: (
      <>
        <circle cx="12" cy="12" r="12" fill="#1b74c9" />
        <path d="M.3 10C1.500 3.500 6.500 0 12 0c7 0 12 5 12 10.500 0 4-3 6-6.500 6-2.500 0-4-1-3.500-2.300 1-1.200 1.500-5.700-4.500-6.200C5 7.800 1.500 9 .3 10z" fill="#3cc48b" />
        <path d="M.3 10C1.500 3.500 6.500 0 12 0c2 0 3 .5 4 1C9 1 4 5 .3 10z" fill="#2aa8d8" />
        <path d="M9 10c-2 5 1 11 8 12-6 4-14 1-16-5-.5-5 3-8.500 8-7z" fill="#1558a5" />
        <path d="M14 14c-.5 1.500 1.500 2.500 3.500 2.500 2 0 3.500-.5 4.800-1.600l.8 1.600c-2 3.500-5 5.800-7.500 4.500-3-1-4-5-1.600-7z" fill="#21343c" />
      </>
    ),
  },
  {
    label: "Internet Explorer",
    icon: (
      <>
        <path d="M19.500 16.500c-1.300 3-4 4.500-7 4.500-4.700 0-8-3.500-8-8s3.500-8 8-8c4.700 0 8 3.500 8 8.500H7" fill="none" stroke="#5cc8f5" strokeWidth="3.800" />
        <path d="M1 23C-2 18 6 6 17 1.500c5-2 7 0 5.500 4" fill="none" stroke="#f6c92b" strokeWidth="1.800" />
      </>
    ),
  },
  {
    label: "File Explorer",
    icon: (
      <>
        <path d="M1 3h8l2 2h12v16H1z" fill="#e0a31d" />
        <path d="M1 6.500h22V21H1z" fill="#fbd567" />
        <path d="M5 13h14v8h-4v-4H9v4H5z" fill="#3f93d6" />
      </>
    ),
  },
  {
    label: "Visio agent",
    icon: (
      <>
        <path d="m6 6 5 13L17 6" fill="none" stroke="#26408a" strokeWidth="2.6" />
        <path d="M0 18C8 8 14 5 23 4l-4 7M23 4c-6-1-9 0-12 2" fill="none" stroke="#2a80bd" strokeWidth="1.2" />
      </>
    ),
  },
  {
    label: "Outlook",
    open: true,
    cell: "bg-[#a66a35]",
    icon: (
      <>
        <path d="M12 6h11v12H12z" fill="#fff" />
        <path d="m13 10 4 4 6-6" fill="none" stroke="#0a6cbd" strokeWidth="1.8" />
        <path d="M1 3.500 14 1v22L1 20.500z" fill="#0a6cbd" />
        <ellipse cx="7" cy="12" rx="2.8" ry="3.6" fill="none" stroke="#fff" strokeWidth="1.8" />
      </>
    ),
  },
  {
    label: "Chrome",
    open: true,
    cell: "bg-[#4f626a]",
    icon: (
      <>
        <circle cx="12" cy="12" r="11" fill="#fbc116" />
        <path d="M12 1a11 11 0 0 1 9.500 5.500H12L7 14 2.500 6.500A11 11 0 0 1 12 1z" fill="#e33b2e" />
        <path d="M2.500 6.500 7.300 15h9.500L11.500 23A11 11 0 0 1 2.500 6.500z" fill="#279a4a" />
        <circle cx="12" cy="12" r="5.3" fill="#fff" />
        <circle cx="12" cy="12" r="4.2" fill="#4285f4" />
      </>
    ),
  },
  {
    label: "Slack",
    icon: (
      <>
        <circle cx="12" cy="12" r="11" fill="#fff" />
        <g strokeWidth="2.6" strokeLinecap="round">
          <path d="M9.900 5.500v.2M5.800 9.900h4" stroke="#36c5f0" />
          <path d="M14.100 5.800v4M18.400 9.900h-.2" stroke="#2eb67d" />
          <path d="M14.100 18.400v-.2M18.200 14.100h-4" stroke="#ecb22e" />
          <path d="M9.900 18.200v-4M5.600 14.100h.2" stroke="#e01e5a" />
        </g>
      </>
    ),
  },
  {
    label: "Teams",
    open: true,
    icon: (
      <>
        <circle cx="13" cy="4" r="3.5" fill="#7b83eb" />
        <circle cx="20" cy="5" r="2.5" fill="#5059c9" />
        <path d="M10 8h13v7a6 6 0 0 1-13 0z" fill="#5059c9" />
        <path d="M0 6h12v12H0z" fill="#4b53bc" />
        <path d="M3 9h6M6 9v7" stroke="#fff" strokeWidth="1.8" />
        <circle cx="19" cy="18" r="6" fill="#d3194f" />
        <text x="19" y="21.5" fontSize="10" fontWeight="700" fontFamily="Open Sans" fill="#fff" textAnchor="middle">5</text>
      </>
    ),
  },
  {
    label: "XA agent",
    open: true,
    icon: (
      <>
        <rect x="1" y="1" width="22" height="22" rx="3" fill="#c9c7c5" />
        <path d="M17 1h3a3 3 0 0 1 3 3v4z" fill="#f0642a" />
        <path d="M5 7c5 2 8 6 11 10M16 8c-4 2-8 5-11 9" fill="none" stroke="#1a1a1a" strokeWidth="2" />
        <path d="m5 7 5 4-5 6" fill="none" stroke="#c9212a" strokeWidth="2" />
        <path d="m17 14 2-4 2 4" fill="none" stroke="#333" />
      </>
    ),
  },
  {
    label: "Notepad",
    open: true,
    icon: (
      <>
        <path d="M8 2h15l-2 19-4 1L1 19z" fill="#d8d4c4" />
        <path d="M8 2h13l-5 19L1 19z" fill="#77b9c6" />
        <path d="M8 2h13l-2 7-13 3z" fill="#b5dfe6" />
      </>
    ),
  },
  {
    label: "Calculator",
    open: true,
    icon: (
      <>
        <path d="M3 0h18v24H3z" fill="#fff" />
        <path d="M6 3h12v4H6z" fill="#21343c" />
        <path d="M6 11h12M6 15.500h12M6 20h12" stroke="#21343c" strokeWidth="2.2" strokeDasharray="2.4 2.4" />
      </>
    ),
  },
  {
    label: "Paint",
    open: true,
    icon: (
      <>
        <path d="M1 16C0 9 7 4 14 5c5 1 8 5 6 8-2 2-5 0-6 3s1 5-3 6-9-1-10-6z" fill="#cfe6f3" />
        <circle cx="6" cy="12" r="1.8" fill="#e2442f" />
        <circle cx="10" cy="8.500" r="1.8" fill="#3fa34d" />
        <circle cx="15" cy="9" r="1.8" fill="#f2c12e" />
        <circle cx="6" cy="17" r="1.8" fill="#3565c9" />
        <path d="M20 1c3 1 2 5 0 6l-5 15-2-1 5-15z" fill="#c98242" />
      </>
    ),
  },
];

function TaskButton({ label, className, children }: { label: string; className?: string; children: ReactNode }) {
  return (
    <button aria-label={label} className={clsx("grid w-12 shrink-0 place-items-center", className)}>
      {children}
    </button>
  );
}

function SearchGlyph({ className }: { className?: string }) {
  return (
    <svg viewBox="0 0 16 16" className={clsx("size-4 shrink-0", className)} fill="none" stroke="currentColor" strokeWidth="1.3">
      <circle cx="10" cy="6" r="5" />
      <path d="M6.300 9.700.5 15.500" />
    </svg>
  );
}

function Taskbar({ full }: { full?: boolean }) {
  return (
    <footer className="flex h-10 shrink-0 bg-linear-to-r from-[#21383f] from-30% to-[#1b2645] font-['Open_Sans',sans-serif] text-white">
      <TaskButton label="Start">
        <svg viewBox="0 0 16 16" className="size-4" fill="#fff">
          <path d="m0 2.300 7-1v6.200H0zM8 1.200 16 0v7.500H8zM0 8.500h7v6.200l-7-1zM8 8.500h8V16l-8-1.200z" />
        </svg>
      </TaskButton>
      {full ? (
        <label className="flex w-[344px] shrink-0 items-center gap-3 bg-[#f3f3f3] pl-3">
          <SearchGlyph className="text-black" />
          <input type="search" aria-label="Search" placeholder="Type here to search" className="w-full text-sm placeholder:text-[#444]" />
        </label>
      ) : (
        <TaskButton label="Search"><SearchGlyph /></TaskButton>
      )}
      <TaskButton label="Task view" className="mr-[3px]">
        <svg viewBox="0 0 16 16" className="size-4" fill="none" stroke="#fff" strokeWidth="1.2">
          <path d="M1 .5v2h9v-2M1 4.600h9v6.800H1zM1 15.500v-2h9v2M13.500.5v15M12.500 5.500H15v3h-2.500z" />
        </svg>
      </TaskButton>
      {apps.map((app) => (
        <button key={app.label} aria-label={app.label} className={clsx("relative grid w-[49px] shrink-0 place-items-center border-r border-transparent bg-clip-padding", app.cell)}>
          <svg viewBox="0 0 24 24" className="size-6">{app.icon}</svg>
          {app.open && (
            <span
              className={clsx(
                "absolute bottom-0 h-0.5",
                app.cell ? "inset-x-0" : "inset-x-1",
                app.label === "Outlook" ? "bg-[#ff7b00]" : "bg-[#76b9ed]",
              )}
            />
          )}
        </button>
      ))}
      <div className={clsx("ml-auto flex items-center", full ? "pr-1" : "pr-[7px]")}>
        {full && (
          <div className="flex items-center gap-2 pr-2.5">
            <svg viewBox="0 0 12 8" className="mr-1 h-2 w-3" fill="none" stroke="#fff" strokeWidth="1.3"><path d="M.5 7 6 1.500 11.500 7" /></svg>
            <svg viewBox="0 0 16 14" className="h-3.5 w-4" fill="none" stroke="#fff">
              <path d="M5 3.500h10.500v7H3.500V6M9.500 10.500v3M6 13.500h7M.5.500h4V4h-4z" />
            </svg>
            <svg viewBox="0 0 16 14" className="h-3.5 w-4" fill="none" stroke="#fff">
              <path d="M.5 4.500H3l3-3v11l-3-3H.5zM8.500 4.500c1 1.500 1 3.500 0 5M10.500 3c2 2.500 2 5.500 0 8M12.500 1.500c3 3.500 3 7.500 0 11" />
            </svg>
          </div>
        )}
        <p className="text-center text-[11px] leading-[18px]">4:29 PM<br />3/28/2021</p>
        {full && (
          <>
            <svg viewBox="0 0 24 24" className="ml-[18px] size-6">
              <path d="M1 2h16v12H9l-3 3v-3H1z" fill="#fff" />
              <path d="M4 5h10M4 8h10M4 11h10" stroke="#1c2a44" />
              <circle cx="16.500" cy="16" r="7" fill="#3a3f4a" stroke="#999" strokeWidth=".6" />
              <text x="16.500" y="19.800" fontSize="10.500" fontWeight="700" fontFamily="Open Sans" fill="#fff" textAnchor="middle">2</text>
            </svg>
            <span className="ml-3 h-10 w-px bg-[#5a6478]" />
          </>
        )}
      </div>
    </footer>
  );
}

export default function App() {
  return (
    <div className="grid h-screen grid-cols-[6fr_5fr] bg-black">
      <div className="flex min-h-0 min-w-0 flex-col pb-[3px]">
        <Browser
          focused
          host="edugen.wileyplus.com"
          path="/edugen/lti/main.uni"
          bookmarkCount={14}
          tabs={[
            { title: "Unit 8 Lab Assignment 116 - AC116 Accounting", icon: <BarnesIcon /> },
            { title: "On January 1, 2020, Crane Corporation", icon: <FcGoogle className="size-4" /> },
            { title: "Course Hero", icon: <CourseHeroIcon /> },
            { title: "On January 1, 2020, Wildhorse Corporation", icon: <FcGoogle className="size-4" /> },
            { title: "WileyPLUS", icon: <GlobeIcon /> },
          ]}
        >
          <WileyPage />
        </Browser>
        <Taskbar />
      </div>
      <div className="flex min-h-0 min-w-0 flex-col pt-[183px]">
        <Browser
          host="answers.yahoo.com"
          path="/question/index?qid=20130920131559AAFhEAC"
          bookmarkCount={12}
          tabs={[{ title: "On January 1, 2014, geffrey corporation", icon: <YahooIcon /> }]}
        >
          <YahooPage />
        </Browser>
        <CallToolbar />
        <Taskbar full />
      </div>
    </div>
  );
}
